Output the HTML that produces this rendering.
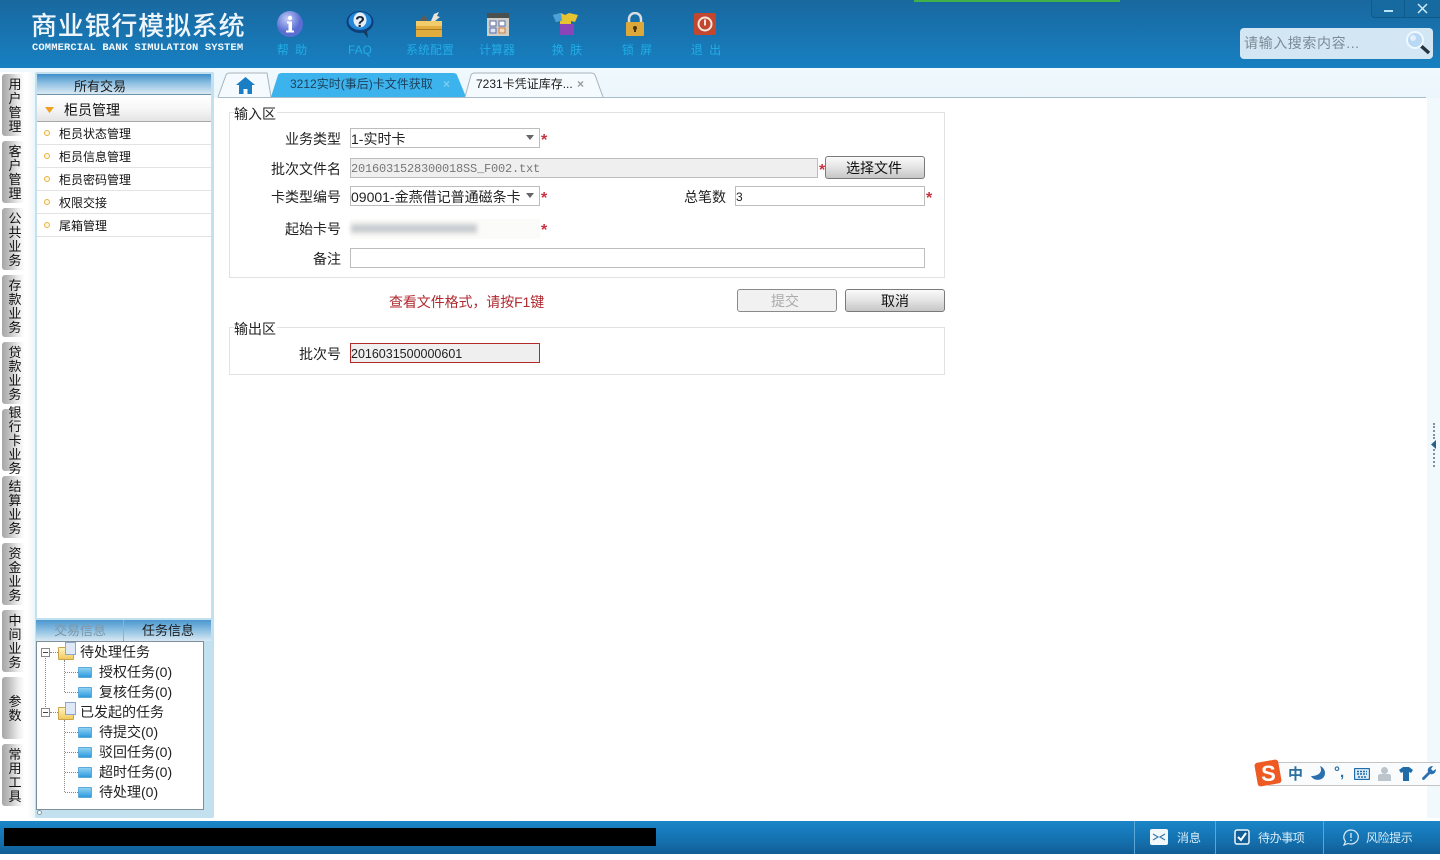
<!DOCTYPE html>
<html lang="zh"><head><meta charset="utf-8"><title>商业银行模拟系统</title>
<style>
*{box-sizing:border-box;margin:0;padding:0}
html,body{width:1440px;height:860px;overflow:hidden;background:#fff}
body{position:relative;font-family:"Liberation Sans","Noto Sans CJK SC",sans-serif;font-size:14px;color:#111}
div,span,svg{position:absolute}
.t{white-space:nowrap;line-height:1}
.nav{color:#22ade6;font-size:12px;text-align:center;white-space:nowrap;line-height:14px;top:43px;word-spacing:3px}
.lt{left:2px;width:22px;height:62px;background:linear-gradient(90deg,#a6a6a6,#bdbdbd 30%,#ebebeb 72%,#fdfdfd);border-radius:3px 0 0 3px;display:flex;align-items:center;justify-content:center;text-align:center;font-size:13px;line-height:14px;color:#111;padding:1px 0 0 4px}
.item{left:37px;width:174px;height:23px;border-bottom:1px solid #e3e3e3;font-size:12px;line-height:25px;padding-left:22px}
.item i{position:absolute;left:7px;top:8px;width:6px;height:6px;border:1px solid #e8b040;border-radius:50%;background:#fff8e0}
.lab{text-align:right;white-space:nowrap;font-size:14px;line-height:20px;color:#222;width:110px;left:231px;margin-top:1px}
.inp{border:1px solid #bdbdbd;background:#fff;font-size:12px;line-height:20px;height:20px;padding-left:0;white-space:nowrap;color:#222}
.star{color:#c8333f;font-size:16px;line-height:16px;font-weight:bold}
.btn{border:1px solid #7a7a7a;border-radius:3px;background:linear-gradient(#fafafa,#e6e6e6 45%,#c6c6c6);text-align:center;font-size:14px;line-height:23px;height:23px;color:#111}
.fs{border:1px solid #e2e2e2;background:#fff;left:229px;width:716px}
.lg{left:234px;font-size:14px;line-height:16px;background:#fff;padding-right:1px;color:#222;margin-top:1px}
.tr{font-size:14px;line-height:20px;white-space:nowrap;color:#222}
.fo{width:14px;height:11px;background:linear-gradient(#8fd2f4,#2f9bdc);border:1px solid #5aa9d8;border-radius:1px}
.dot{border-top:1px dotted #888;height:0}
.dv{border-left:1px dotted #888;width:0}
.pm{width:9px;height:9px;border:1px solid #888;background:#fff;font-size:0}
.pm:after{content:"";position:absolute;left:1px;top:3px;width:5px;height:1px;background:#444}
.ofo{width:16px;height:13px;background:linear-gradient(#fff4c0,#f2c95c);border:1px solid #c9a44c;border-radius:1px}
.ofo:before{content:"";position:absolute;left:6px;top:-6px;width:9px;height:11px;background:#dfe8f6;border:1px solid #8fa6cc}
.bar{color:#d6ecf8;font-size:12px;line-height:14px;white-space:nowrap;top:831px}
.sep{top:821px;width:1px;height:33px;background:#5aa6d8}
</style></head><body>

<!-- Header -->
<div style="left:0;top:0;width:1440px;height:68px;background:linear-gradient(#19689f,#1780c1)"></div>
<div class="t" style="left:31px;top:12px;font-size:26px;font-weight:500;color:#eef6fb;letter-spacing:.8px;font-family:'Noto Sans CJK SC',sans-serif">商业银行模拟系统</div>
<div class="t" style="left:32px;top:43px;font-family:'Liberation Mono',monospace;font-weight:bold;font-size:10.500px;color:#f2f8fc;letter-spacing:.1px">COMMERCIAL BANK SIMULATION SYSTEM</div>
<div style="left:914px;top:0;width:206px;height:2px;background:#3fb04a"></div>

<!-- toolbar icons -->
<svg style="left:277px;top:11px" width="26" height="26" viewBox="0 0 26 26"><defs><radialGradient id="a" cx=".4" cy=".3"><stop offset="0" stop-color="#c4cdf8"/><stop offset="1" stop-color="#5a6ed2"/></radialGradient></defs><circle cx="13" cy="13" r="13" fill="url(#a)"/><circle cx="13" cy="7" r="2.200" fill="#fff"/><path d="M10 10.500h5v9h2v2H9v-2h2.500v-7H10z" fill="#fff"/></svg>
<svg style="left:345px;top:10px" width="30" height="28" viewBox="0 0 30 28"><ellipse cx="15" cy="12" rx="13.500" ry="11" fill="#0d3f78"/><ellipse cx="15" cy="11" rx="11.500" ry="9" fill="#2388da"/><ellipse cx="15" cy="10" rx="6.500" ry="7.500" fill="#e8eef5"/><path d="M18 22l5 6-1-7z" fill="#163a5a"/><text x="15" y="17" font-size="16" font-weight="bold" text-anchor="middle" fill="#15233a" font-family="Liberation Sans">?</text></svg>
<svg style="left:415px;top:11px" width="28" height="26" viewBox="0 0 28 26"><rect x="1" y="10" width="26" height="16" fill="#e2ad3c"/><rect x="1" y="10" width="26" height="5" fill="#f2cc6a"/><rect x="1" y="18" width="26" height="1" fill="#a87820"/><path d="M4 10l5-6 4 4-2 2z" fill="#5c5c5c"/><path d="M16 10l3-7 5-2-2 4 3 1-5 4z" fill="#e8e4da"/></svg>
<svg style="left:486px;top:13px" width="24" height="23" viewBox="0 0 24 23"><rect x="1" y="0" width="22" height="23" fill="#cfcfc8"/><rect x="1" y="0" width="22" height="5" fill="#4a5050"/><rect x="4" y="8" width="6" height="5" fill="#fff" stroke="#5a6ea8"/><rect x="13" y="8" width="6" height="5" fill="#fff" stroke="#5a6ea8"/><rect x="4" y="15" width="6" height="5" fill="#dbe4f5" stroke="#5a6ea8"/><rect x="13" y="15" width="6" height="5" fill="#f5d8b8" stroke="#c8804a"/></svg>
<svg style="left:552px;top:12px" width="28" height="24" viewBox="0 0 28 24"><path d="M1 3l8-2 4 2 4-2 9 2-3 7-4-1v14H8V9L4 10z" fill="#e6c330"/><path d="M1 3l8-2 1 8-2 0-4 1z" fill="#4aa0d8"/><path d="M8 12h14v11H8z" fill="#8a45b8"/></svg>
<svg style="left:625px;top:12px" width="20" height="24" viewBox="0 0 20 24"><path d="M4 11V7a6 6 0 0 1 12 0v4" fill="none" stroke="#d8dde2" stroke-width="2.500"/><rect x="1" y="10" width="18" height="14" rx="1" fill="#dca83a"/><circle cx="10" cy="16" r="2" fill="#4a3408"/><rect x="9" y="16" width="2" height="4" fill="#4a3408"/></svg>
<svg style="left:694px;top:13px" width="22" height="22" viewBox="0 0 22 22"><rect x="0" y="0" width="22" height="22" rx="2" fill="#c2472e"/><circle cx="11" cy="11" r="6.500" fill="none" stroke="#f6e6e0" stroke-width="2"/><rect x="10" y="6.500" width="2" height="6" fill="#f6e6e0"/></svg>

<div class="nav" style="left:270px;width:44px">帮 助</div>
<div class="nav" style="left:338px;width:44px">FAQ</div>
<div class="nav" style="left:402px;width:56px">系统配置</div>
<div class="nav" style="left:472px;width:50px">计算器</div>
<div class="nav" style="left:545px;width:44px">换 肤</div>
<div class="nav" style="left:615px;width:44px">锁 屏</div>
<div class="nav" style="left:684px;width:44px">退 出</div>

<!-- window buttons -->
<div style="left:1371px;top:0;width:69px;height:18px;background:#166a9f;border:1px solid #0f5a8c;border-top:0;border-right:0;border-radius:0 0 0 4px"></div>
<div style="left:1404px;top:0;width:1px;height:18px;background:#0f5a8c"></div>
<div style="left:1384px;top:10px;width:9px;height:2px;background:#b8e2f6"></div>
<svg style="left:1417px;top:3px" width="11" height="11" viewBox="0 0 11 11"><path d="M1 1l9 9M10 1l-9 9" stroke="#cfeaf8" stroke-width="1.500"/></svg>

<!-- search -->
<div style="left:1240px;top:28px;width:193px;height:31px;background:#d3e6f4;border-radius:4px"></div>
<div class="t" style="left:1244px;top:36px;font-size:14px;color:#7d8a96;letter-spacing:.6px">请输入搜索内容...</div>
<svg style="left:1405px;top:30px" width="26" height="26" viewBox="0 0 26 26"><path d="M15 15l9 8" stroke="#26323c" stroke-width="3.500"/><circle cx="10" cy="10" r="8" fill="#b9d8f4" stroke="#eef8ff" stroke-width="2"/><circle cx="8" cy="8" r="3" fill="#fff" opacity=".6"/></svg>

<!-- Tab strip -->
<div style="left:214px;top:68px;width:1226px;height:30px;background:linear-gradient(#f0f9fd,#ebf6fb)"></div>
<div style="left:218px;top:97px;width:1208px;height:1px;background:#a9bccb"></div>
<div style="left:0;top:68px;width:214px;height:750px;background:linear-gradient(90deg,#fff 0,#fff 28px,#eaf6fb 35px)"></div>
<div style="left:0;top:68px;width:214px;height:4px;background:#eef8fd"></div>

<svg style="left:217px;top:72px" width="390" height="26" viewBox="0 0 390 26">
<path d="M1 25L9 3q1-2 4-2h37l4 24" fill="#f4fafd" stroke="#a9b4bc"/>
<path d="M54 25L61 3q1-2 4-2h171q3 0 4 2l9 22z" fill="#3cb3ec"/>
<path d="M248 25L254 3q1-2 4-2h116q3 0 4 2l8 22" fill="#f4fafd" stroke="#a9b4bc"/>
</svg>
<svg style="left:236px;top:77px" width="19" height="17" viewBox="0 0 19 17"><path d="M9.500 0L19 8h-3v9h-4.500v-5h-4v5H3V8H0z" fill="#1a7ec4"/></svg>
<div class="t" style="left:290px;top:78px;font-size:12px;color:#1c3f5c">3212实时(事后)卡文件获取</div>
<div class="t" style="left:443px;top:78px;font-size:12px;color:#7fcdf0;font-weight:bold">×</div>
<div class="t" style="left:476px;top:78px;font-size:12px;color:#222">7231卡凭证库存...</div>
<div class="t" style="left:577px;top:78px;font-size:12px;color:#999;font-weight:bold">×</div>

<!-- Left vertical tabs -->
<div class="lt" style="top:74px">用<br>户<br>管<br>理</div>
<div class="lt" style="top:141px">客<br>户<br>管<br>理</div>
<div class="lt" style="top:208px">公<br>共<br>业<br>务</div>
<div class="lt" style="top:275px">存<br>款<br>业<br>务</div>
<div class="lt" style="top:342px">贷<br>款<br>业<br>务</div>
<div class="lt" style="top:409px">银<br>行<br>卡<br>业<br>务</div>
<div class="lt" style="top:476px">结<br>算<br>业<br>务</div>
<div class="lt" style="top:543px">资<br>金<br>业<br>务</div>
<div class="lt" style="top:610px">中<br>间<br>业<br>务</div>
<div class="lt" style="top:677px">参<br>数</div>
<div class="lt" style="top:744px">常<br>用<br>工<br>具</div>

<!-- Sidebar -->
<div style="left:35px;top:72px;width:179px;height:746px;background:#c3e0ee;border-radius:2px"></div>
<div style="left:37px;top:74px;width:174px;height:544px;background:#fff"></div>
<div style="left:37px;top:74px;width:174px;height:21px;background:linear-gradient(#3f8fca,#8dbfe2 45%,#dbe9f3);border-bottom:1px solid #6f93ab"></div>
<div class="t" style="left:74px;top:80px;font-size:13px;color:#1a1a1a">所有交易</div>
<div style="left:37px;top:97px;width:174px;height:25px;background:linear-gradient(#fff,#f6f6f6 50%,#e4e4e4);border-bottom:1px solid #a9a9a9"></div>
<svg style="left:45px;top:107px" width="9" height="6"><path d="M0 0h9L4.500 6z" fill="#f0a020"/></svg>
<div class="t" style="left:64px;top:103px;font-size:14px">柜员管理</div>
<div class="item" style="top:122px"><i></i>柜员状态管理</div>
<div class="item" style="top:145px"><i></i>柜员信息管理</div>
<div class="item" style="top:168px"><i></i>柜员密码管理</div>
<div class="item" style="top:191px"><i></i>权限交接</div>
<div class="item" style="top:214px"><i></i>尾箱管理</div>

<!-- Lower sidebar -->
<div style="left:36px;top:620px;width:175px;height:21px;background:linear-gradient(#4a97cf,#8ec0e2 50%,#d9e9f3)"></div>
<div style="left:123px;top:620px;width:1px;height:21px;background:#8fb2c8"></div>
<div class="t" style="left:54px;top:624px;font-size:13px;color:#7e97a8">交易信息</div>
<div class="t" style="left:142px;top:624px;font-size:13px;color:#1a1a1a">任务信息</div>
<div style="left:36px;top:641px;width:168px;height:169px;background:#fff;border:1px solid #7f8f99"></div>
<div style="left:37px;top:810px;width:5px;height:5px;background:#fff;border:1px solid #7f9aa8;border-radius:50%"></div>

<div class="dv" style="left:45px;top:655px;height:58px"></div>
<div class="dot" style="left:50px;top:652px;width:8px"></div>
<div class="dot" style="left:50px;top:712px;width:8px"></div>
<div class="pm" style="left:41px;top:648px"></div>
<div class="pm" style="left:41px;top:708px"></div>
<div class="ofo" style="left:58px;top:647px"></div>
<div class="ofo" style="left:58px;top:707px"></div>
<div class="dv" style="left:64px;top:660px;height:32px"></div>
<div class="dv" style="left:64px;top:720px;height:72px"></div>
<div class="dot" style="left:65px;top:672px;width:13px"></div>
<div class="dot" style="left:65px;top:692px;width:13px"></div>
<div class="dot" style="left:65px;top:732px;width:13px"></div>
<div class="dot" style="left:65px;top:752px;width:13px"></div>
<div class="dot" style="left:65px;top:772px;width:13px"></div>
<div class="dot" style="left:65px;top:792px;width:13px"></div>
<div class="fo" style="left:78px;top:667px"></div>
<div class="fo" style="left:78px;top:687px"></div>
<div class="fo" style="left:78px;top:727px"></div>
<div class="fo" style="left:78px;top:747px"></div>
<div class="fo" style="left:78px;top:767px"></div>
<div class="fo" style="left:78px;top:787px"></div>
<div class="tr" style="left:80px;top:642px">待处理任务</div>
<div class="tr" style="left:99px;top:662px">授权任务(0)</div>
<div class="tr" style="left:99px;top:682px">复核任务(0)</div>
<div class="tr" style="left:80px;top:702px">已发起的任务</div>
<div class="tr" style="left:99px;top:722px">待提交(0)</div>
<div class="tr" style="left:99px;top:742px">驳回任务(0)</div>
<div class="tr" style="left:99px;top:762px">超时任务(0)</div>
<div class="tr" style="left:99px;top:782px">待处理(0)</div>

<!-- Input fieldset -->
<div class="fs" style="top:112px;height:166px"></div>
<div class="lg" style="top:105px">输入区</div>
<div class="lab" style="top:128px">业务类型</div>
<div class="inp" style="left:350px;top:128px;width:190px;font-size:14px">1-实时卡</div>
<svg style="left:526px;top:135px" width="8" height="5"><path d="M0 0h8L4 5z" fill="#666"/></svg>
<div class="star" style="left:541px;top:133px">*</div>

<div class="lab" style="top:158px">批次文件名</div>
<div class="inp" style="left:350px;top:158px;width:468px;background:#efefef;color:#777;font-family:'Liberation Mono',monospace;font-size:12px;letter-spacing:-.2px">2016031528300018SS_F002.txt</div>
<div class="star" style="left:819px;top:163px">*</div>
<div class="btn" style="left:825px;top:156px;width:100px;padding-right:2px">选择文件</div>

<div class="lab" style="top:186px">卡类型编号</div>
<div class="inp" style="left:350px;top:186px;width:190px;font-size:14px">09001-金燕借记普通磁条卡</div>
<svg style="left:526px;top:193px" width="8" height="5"><path d="M0 0h8L4 5z" fill="#666"/></svg>
<div class="star" style="left:541px;top:191px">*</div>
<div class="lab" style="top:186px;left:616px">总笔数</div>
<div class="inp" style="left:735px;top:186px;width:190px">3</div>
<div class="star" style="left:926px;top:191px">*</div>

<div class="lab" style="top:218px">起始卡号</div>
<div style="left:350px;top:219px;width:190px;height:20px;background:#fbfbf9"></div>
<div style="left:351px;top:224px;width:126px;height:9px;background:#c8cdd0;filter:blur(2.500px)"></div>
<div class="star" style="left:541px;top:223px">*</div>

<div class="lab" style="top:248px">备注</div>
<div class="inp" style="left:350px;top:248px;width:575px"></div>

<div class="t" style="left:389px;top:295px;font-size:14px;color:#b02a30;letter-spacing:-.1px">查看文件格式，请按F1键</div>
<div class="btn" style="left:737px;top:289px;width:100px;color:#aaa;background:#f1f1f1;border-color:#8a8a8a;padding-right:4px">提交</div>
<div class="btn" style="left:845px;top:289px;width:100px">取消</div>

<!-- Output fieldset -->
<div class="fs" style="top:327px;height:48px"></div>
<div class="lg" style="top:320px">输出区</div>
<div class="lab" style="top:343px">批次号</div>
<div class="inp" style="left:350px;top:343px;width:190px;background:#efefef;border-color:#b22a2a;color:#222;font-size:12.500px">2016031500000601</div>

<!-- right collapse handle -->
<div style="left:1427px;top:98px;width:13px;height:720px;background:#f1f9fc"></div>
<div style="left:1433px;top:423px;width:0;height:16px;border-left:2px dotted #7f919e"></div>
<div style="left:1433px;top:449px;width:0;height:18px;border-left:2px dotted #7f919e"></div>
<svg style="left:1431px;top:440px" width="5" height="9"><path d="M5 0L0 4.500 5 9z" fill="#2d5f86"/></svg>

<!-- Sogou IME -->
<div style="left:1268px;top:762px;width:172px;height:24px;background:#fafbfc;border:1px solid #c4c4c4;border-right:0"></div>
<svg style="left:1254px;top:759px" width="29" height="28" viewBox="0 0 29 28"><rect x="2" y="2" width="24" height="24" rx="3" fill="#ee5a24" transform="rotate(-10 14 14)"/><text x="14.500" y="22" font-size="22" font-weight="bold" text-anchor="middle" fill="#fff" font-family="Liberation Sans">S</text></svg>
<div class="t" style="left:1288px;top:767px;font-size:15px;font-weight:bold;color:#2a6f9f">中</div>
<svg style="left:1311px;top:766px" width="15" height="16" viewBox="0 0 15 16"><path d="M9 0c3 6-1 10-9 10 3 6 14 5 14-3 0-3-2-6-5-7z" fill="#2a6fb0"/></svg>
<div class="t" style="left:1334px;top:765px;font-size:15px;font-weight:bold;color:#2a6f9f">°,</div>
<svg style="left:1354px;top:768px" width="16" height="12" viewBox="0 0 16 12"><rect x=".5" y=".5" width="15" height="11" rx="1" fill="#dcebf6" stroke="#1f6ca8" stroke-width="1.300"/><path d="M3 3.500h10M3 6h10M4 9h8" stroke="#1f6ca8" stroke-width="1.500" stroke-dasharray="2 1"/></svg>
<svg style="left:1378px;top:767px" width="13" height="14" viewBox="0 0 13 14"><circle cx="6.500" cy="3.500" r="3.500" fill="#bcc4cc"/><path d="M0 14V9q0-2 3-2h7q3 0 3 2v5z" fill="#bcc4cc"/></svg>
<svg style="left:1399px;top:767px" width="14" height="14" viewBox="0 0 14 14"><path d="M4 0h6l4 3-2 3-2-1v9H4V5L2 6 0 3z" fill="#1f6ca8"/></svg>
<svg style="left:1421px;top:766px" width="15" height="15" viewBox="0 0 15 15"><path d="M1 12l6-6c-1-3 1-6 5-6l-2 3 2 2 3-2c0 4-3 6-6 5l-6 6q-2 0-2-2z" fill="#2a6fb0"/></svg>

<!-- Bottom bar -->
<div style="left:0;top:821px;width:1440px;height:33px;background:linear-gradient(#1a86c8,#1470ae 60%,#125e96)"></div>
<div style="left:4px;top:828px;width:652px;height:18px;background:#000"></div>
<div class="sep" style="left:1134px"></div>
<div class="sep" style="left:1215px"></div>
<div class="sep" style="left:1323px"></div>
<div style="left:1150px;top:829px;width:18px;height:16px;background:#f2f7fa;border-radius:2px"></div>
<svg style="left:1150px;top:829px" width="18" height="16" viewBox="0 0 18 16"><path d="M3 5l5 3-5 3M15 5l-5 3 5 3" fill="none" stroke="#3a7ca8" stroke-width="1.200"/></svg>
<div class="bar" style="left:1177px">消息</div>
<svg style="left:1234px;top:829px" width="16" height="16" viewBox="0 0 16 16"><rect x="1" y="1" width="14" height="14" rx="2" fill="#125e96" stroke="#eef6fb" stroke-width="1.500"/><path d="M4 8l3 3 5-7" fill="none" stroke="#fff" stroke-width="2"/></svg>
<div class="bar" style="left:1258px;letter-spacing:-.4px">待办事项</div>
<svg style="left:1342px;top:829px" width="18" height="17" viewBox="0 0 18 17"><path d="M9 1a7.500 7 0 1 1-3 13.500L2 16l1.500-3.500A7 7 0 0 1 9 1z" fill="none" stroke="#dcedf8" stroke-width="1.200"/><path d="M9 4v5M9 10.500v1.500" stroke="#dcedf8" stroke-width="1.300"/></svg>
<div class="bar" style="left:1366px;letter-spacing:-.4px">风险提示</div>

</body></html>
